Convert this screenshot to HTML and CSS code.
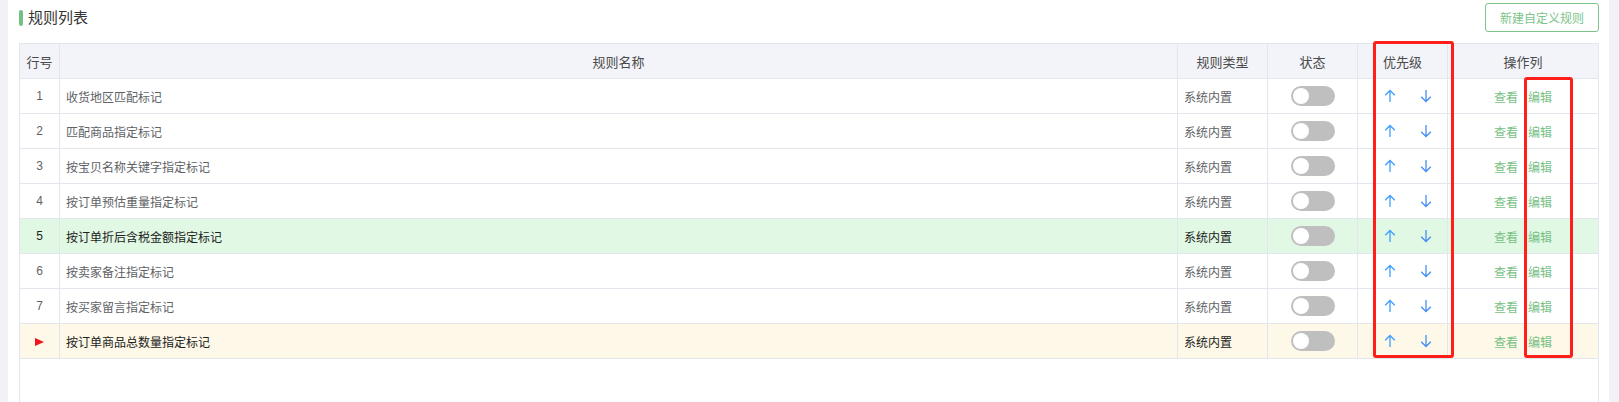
FILE: index.html
```html
<!DOCTYPE html>
<html lang="zh-CN">
<head>
    <meta charset="UTF-8">
    <title>规则列表</title>
    <link rel="stylesheet" href="styles.css">
</head>
<body>
    <div class="panel">
        <div class="panel-head">
            <div class="title">规则列表</div>
            <button class="btn-new">新建自定义规则</button>
        </div>

        <div class="table-wrap">
            <table class="rules">
                <colgroup>
                    <col class="c-no">
                    <col class="c-name">
                    <col class="c-type">
                    <col class="c-state">
                    <col class="c-prio">
                    <col class="c-ops">
                </colgroup>
                <thead>
                    <tr>
                        <th>行号</th>
                        <th>规则名称</th>
                        <th>规则类型</th>
                        <th>状态</th>
                        <th>优先级</th>
                        <th>操作列</th>
                    </tr>
                </thead>
                <tbody>
                    <tr>
                        <td class="no">1</td>
                        <td>收货地区匹配标记</td>
                        <td>系统内置</td>
                        <td class="state"><span class="switch"></span></td>
                        <td class="prio"><span class="up"></span><span class="down"></span></td>
                        <td class="ops"><a>查看</a><a>编辑</a></td>
                    </tr>
                    <tr>
                        <td class="no">2</td>
                        <td>匹配商品指定标记</td>
                        <td>系统内置</td>
                        <td class="state"><span class="switch"></span></td>
                        <td class="prio"><span class="up"></span><span class="down"></span></td>
                        <td class="ops"><a>查看</a><a>编辑</a></td>
                    </tr>
                    <tr>
                        <td class="no">3</td>
                        <td>按宝贝名称关键字指定标记</td>
                        <td>系统内置</td>
                        <td class="state"><span class="switch"></span></td>
                        <td class="prio"><span class="up"></span><span class="down"></span></td>
                        <td class="ops"><a>查看</a><a>编辑</a></td>
                    </tr>
                    <tr>
                        <td class="no">4</td>
                        <td>按订单预估重量指定标记</td>
                        <td>系统内置</td>
                        <td class="state"><span class="switch"></span></td>
                        <td class="prio"><span class="up"></span><span class="down"></span></td>
                        <td class="ops"><a>查看</a><a>编辑</a></td>
                    </tr>
                    <tr class="hover">
                        <td class="no">5</td>
                        <td>按订单折后含税金额指定标记</td>
                        <td>系统内置</td>
                        <td class="state"><span class="switch"></span></td>
                        <td class="prio"><span class="up"></span><span class="down"></span></td>
                        <td class="ops"><a>查看</a><a>编辑</a></td>
                    </tr>
                    <tr>
                        <td class="no">6</td>
                        <td>按卖家备注指定标记</td>
                        <td>系统内置</td>
                        <td class="state"><span class="switch"></span></td>
                        <td class="prio"><span class="up"></span><span class="down"></span></td>
                        <td class="ops"><a>查看</a><a>编辑</a></td>
                    </tr>
                    <tr>
                        <td class="no">7</td>
                        <td>按买家留言指定标记</td>
                        <td>系统内置</td>
                        <td class="state"><span class="switch"></span></td>
                        <td class="prio"><span class="up"></span><span class="down"></span></td>
                        <td class="ops"><a>查看</a><a>编辑</a></td>
                    </tr>
                    <tr class="current">
                        <td class="no"><span class="flag"></span></td>
                        <td>按订单商品总数量指定标记</td>
                        <td>系统内置</td>
                        <td class="state"><span class="switch"></span></td>
                        <td class="prio"><span class="up"></span><span class="down"></span></td>
                        <td class="ops"><a>查看</a><a>编辑</a></td>
                    </tr>
                </tbody>
            </table>
        </div>
    </div>

    <!-- annotation boxes from the screenshot -->
    <div class="mark mark-prio"></div>
    <div class="mark mark-edit"></div>
</body>
</html>
```

FILE: styles.css
```css
body {
    margin: 0;
    background: #f0f2f7;
    font-family: "Liberation Sans", "Noto Sans CJK SC", sans-serif;
    font-size: 12px;
    color: #606266;
    overflow: hidden;
}
.panel {
    box-sizing: border-box;
    background: #fff;
    margin: 0 10px 0 8px;
    padding: 0 10px 0 11px;
    height: 402px;
}
.panel-head {
    height: 35px;
    display: flex;
    align-items: center;
    justify-content: space-between;
    margin-bottom: 8px;
}
.title {
    display: flex;
    align-items: center;
    font-size: 15px;
    color: #333;
    line-height: 16px;
}
.title::before {
    content: "";
    width: 4px;
    height: 16px;
    border-radius: 2px;
    background: #74c080;
    margin-right: 5px;
}
.btn-new {
    box-sizing: border-box;
    width: 114px;
    height: 29px;
    border: 1px solid #7cc48a;
    border-radius: 3px;
    background: #fff;
    color: #7cc48a;
    font-family: inherit;
    font-size: 12px;
    padding: 0;
}
.table-wrap {
    box-sizing: border-box;
    border: 1px solid #e4e6ee;
    border-bottom: none;
    height: 359px;
}
.rules {
    border-collapse: separate;
    border-spacing: 0;
    table-layout: fixed;
    width: 100%;
}
.c-no { width: 40px; }
.c-type, .c-state, .c-prio { width: 90px; }
.c-ops { width: 150px; }
.rules th, .rules td {
    box-sizing: border-box;
    height: 35px;
    padding: 0 6px;
    border-right: 1px solid #e4e6ee;
    border-bottom: 1px solid #e4e6ee;
    white-space: nowrap;
}
.rules th:last-child, .rules td:last-child { border-right: none; }
.rules th {
    background: #f3f4f9;
    font-weight: normal;
    font-size: 13px;
    color: #4a4a4a;
    text-align: center;
}
.rules td { text-align: left; }
.rules td.no { text-align: center; padding: 0; }
.rules tr.hover td { background: #e1f8e4; color: #222; }
.rules tr.current td { background: #fdf8e7; color: #222; }

.flag {
    display: inline-block;
    width: 0;
    height: 0;
    border-top: 4px solid transparent;
    border-bottom: 4px solid transparent;
    border-left: 9px solid #f0141e;
    vertical-align: middle;
}
.state { text-align: center !important; }
.switch {
    display: inline-block;
    position: relative;
    width: 44px;
    height: 20px;
    border-radius: 10px;
    background: #bfbfbf;
    vertical-align: middle;
}
.switch::after {
    content: "";
    position: absolute;
    left: 2px;
    top: 2px;
    width: 16px;
    height: 16px;
    border-radius: 50%;
    background: #fff;
}
.prio { padding-left: 26px !important; }
.up, .down {
    display: inline-block;
    width: 12px;
    height: 14px;
    vertical-align: middle;
    background-repeat: no-repeat;
}
.up {
    background-image: url("data:image/svg+xml,%3Csvg xmlns='http://www.w3.org/2000/svg' width='12' height='14'%3E%3Cpath d='M6 13V1.5M1.2 6.3L6 1.5l4.8 4.8' fill='none' stroke='%23409eff' stroke-width='1.3'/%3E%3C/svg%3E");
}
.down {
    margin-left: 24px;
    background-image: url("data:image/svg+xml,%3Csvg xmlns='http://www.w3.org/2000/svg' width='12' height='14'%3E%3Cpath d='M6 1v11.5M1.2 7.7L6 12.5l4.8-4.8' fill='none' stroke='%23468ff5' stroke-width='1.3'/%3E%3C/svg%3E");
}
.ops { text-align: center !important; }
.ops a {
    color: #78c185;
    cursor: pointer;
}
.ops a + a { margin-left: 10px; }

.mark {
    position: absolute;
    box-sizing: border-box;
    border: 3px solid #ff1f1a;
    border-radius: 3px;
}
.mark-prio { left: 1373px; top: 41px; width: 81px; height: 317px; }
.mark-edit { left: 1524px; top: 77px; width: 49px; height: 281px; }
```
